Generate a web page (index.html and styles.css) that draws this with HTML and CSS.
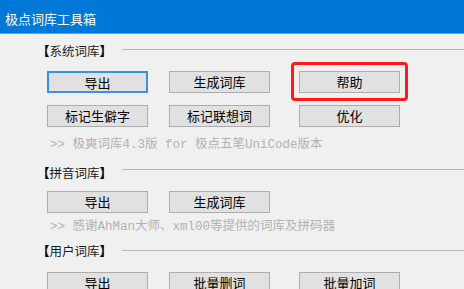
FILE: index.html
```html
<!DOCTYPE html>
<html lang="zh-CN">
<head>
  <meta charset="UTF-8">
  <title>极点词库工具箱</title>
  <link rel="stylesheet" href="styles.css">
</head>
<body>

  <div class="titlebar">极点词库工具箱</div>

  <div class="content">
    <div class="group-title first">
      <span><b>【</b>系统词库<b>】</b></span>
      <span class="rule"></span>
    </div>
    <div class="row row-a">
      <button class="btn focused">导出</button>
      <button class="btn">生成词库</button>
      <button class="btn third highlighted">帮助</button>
    </div>
    <div class="row row-b">
      <button class="btn">标记生僻字</button>
      <button class="btn">标记联想词</button>
      <button class="btn third">优化</button>
    </div>
    <p class="info">&gt;&gt; 极爽词库4.3版 for 极点五笔UniCode版本</p>

    <div class="group-title second">
      <span><b>【</b>拼音词库<b>】</b></span>
      <span class="rule"></span>
    </div>
    <div class="row row-c">
      <button class="btn">导出</button>
      <button class="btn">生成词库</button>
    </div>
    <p class="info info-2">&gt;&gt; 感谢AhMan大师、xml00等提供的词库及拼码器</p>

    <div class="group-title third-group">
      <span><b>【</b>用户词库<b>】</b></span>
      <span class="rule"></span>
    </div>
    <div class="row row-d">
      <button class="btn">导出</button>
      <button class="btn">批量删词</button>
      <button class="btn third">批量加词</button>
    </div>
  </div>

</body>
</html>
```

FILE: styles.css
```css
body {
  margin: 0;
  background-color: #f0f0f0;
  font-family: "Noto Sans CJK SC", sans-serif;
  overflow: hidden;
}

.titlebar {
  height: 34px;
  box-sizing: border-box;
  padding: 4px 0 0 5px;
  line-height: 30px;
  font-size: 13px;
  color: white;
  background-color: #0078d7;
  border-bottom: 1px solid #5aa5e6;
}

.content {
  padding-left: 37px;
}

.group-title {
  display: flex;
  align-items: center;
  height: 14px;
  font-size: 12.5px;
  line-height: 14px;
  color: #1a1a1a;
}

.group-title b {
  font-weight: 900;
  color: #000;
}

.group-title .rule {
  flex: 1;
  height: 0;
  margin-left: 10px;
  border-top: 1px solid #b9b9b9;
  margin-bottom: 4px;
}

.group-title.first {
  margin-top: 10px;
}

.group-title.second {
  margin-top: 13px;
}

.group-title.second .rule {
  margin-bottom: 7px;
}

.group-title.third-group {
  margin-top: 9px;
}

.group-title.third-group .rule {
  margin-bottom: 1px;
}

.row {
  display: flex;
  gap: 21px;
  padding-left: 10px;
}

.row-a {
  margin-top: 13px;
}

.row-b {
  margin-top: 12px;
}

.row-c {
  margin-top: 11px;
}

.row-d {
  margin-top: 14px;
}

.btn {
  position: relative;
  width: 101px;
  height: 22px;
  padding: 0;
  border: 1px solid #adadad;
  background-color: #e1e1e1;
  font-family: "Noto Sans CJK SC", sans-serif;
  font-size: 13px;
  line-height: 20px;
  color: #000;
}

.btn.third {
  margin-left: 8px;
}

.btn.focused {
  border: 2px solid #3f8fdc;
}

.btn.highlighted::after {
  content: "";
  position: absolute;
  left: -9px;
  right: -9px;
  top: -10px;
  bottom: -9px;
  border: 3px solid #ff1a1a;
  border-radius: 4px;
}

.info {
  margin: 11px 0 0 13px;
  font-family: "Liberation Mono", "Noto Sans CJK SC", monospace;
  font-size: 12.5px;
  line-height: 15px;
  color: #b2b2b2;
}

.info-2 {
  margin-top: 7px;
}
```
